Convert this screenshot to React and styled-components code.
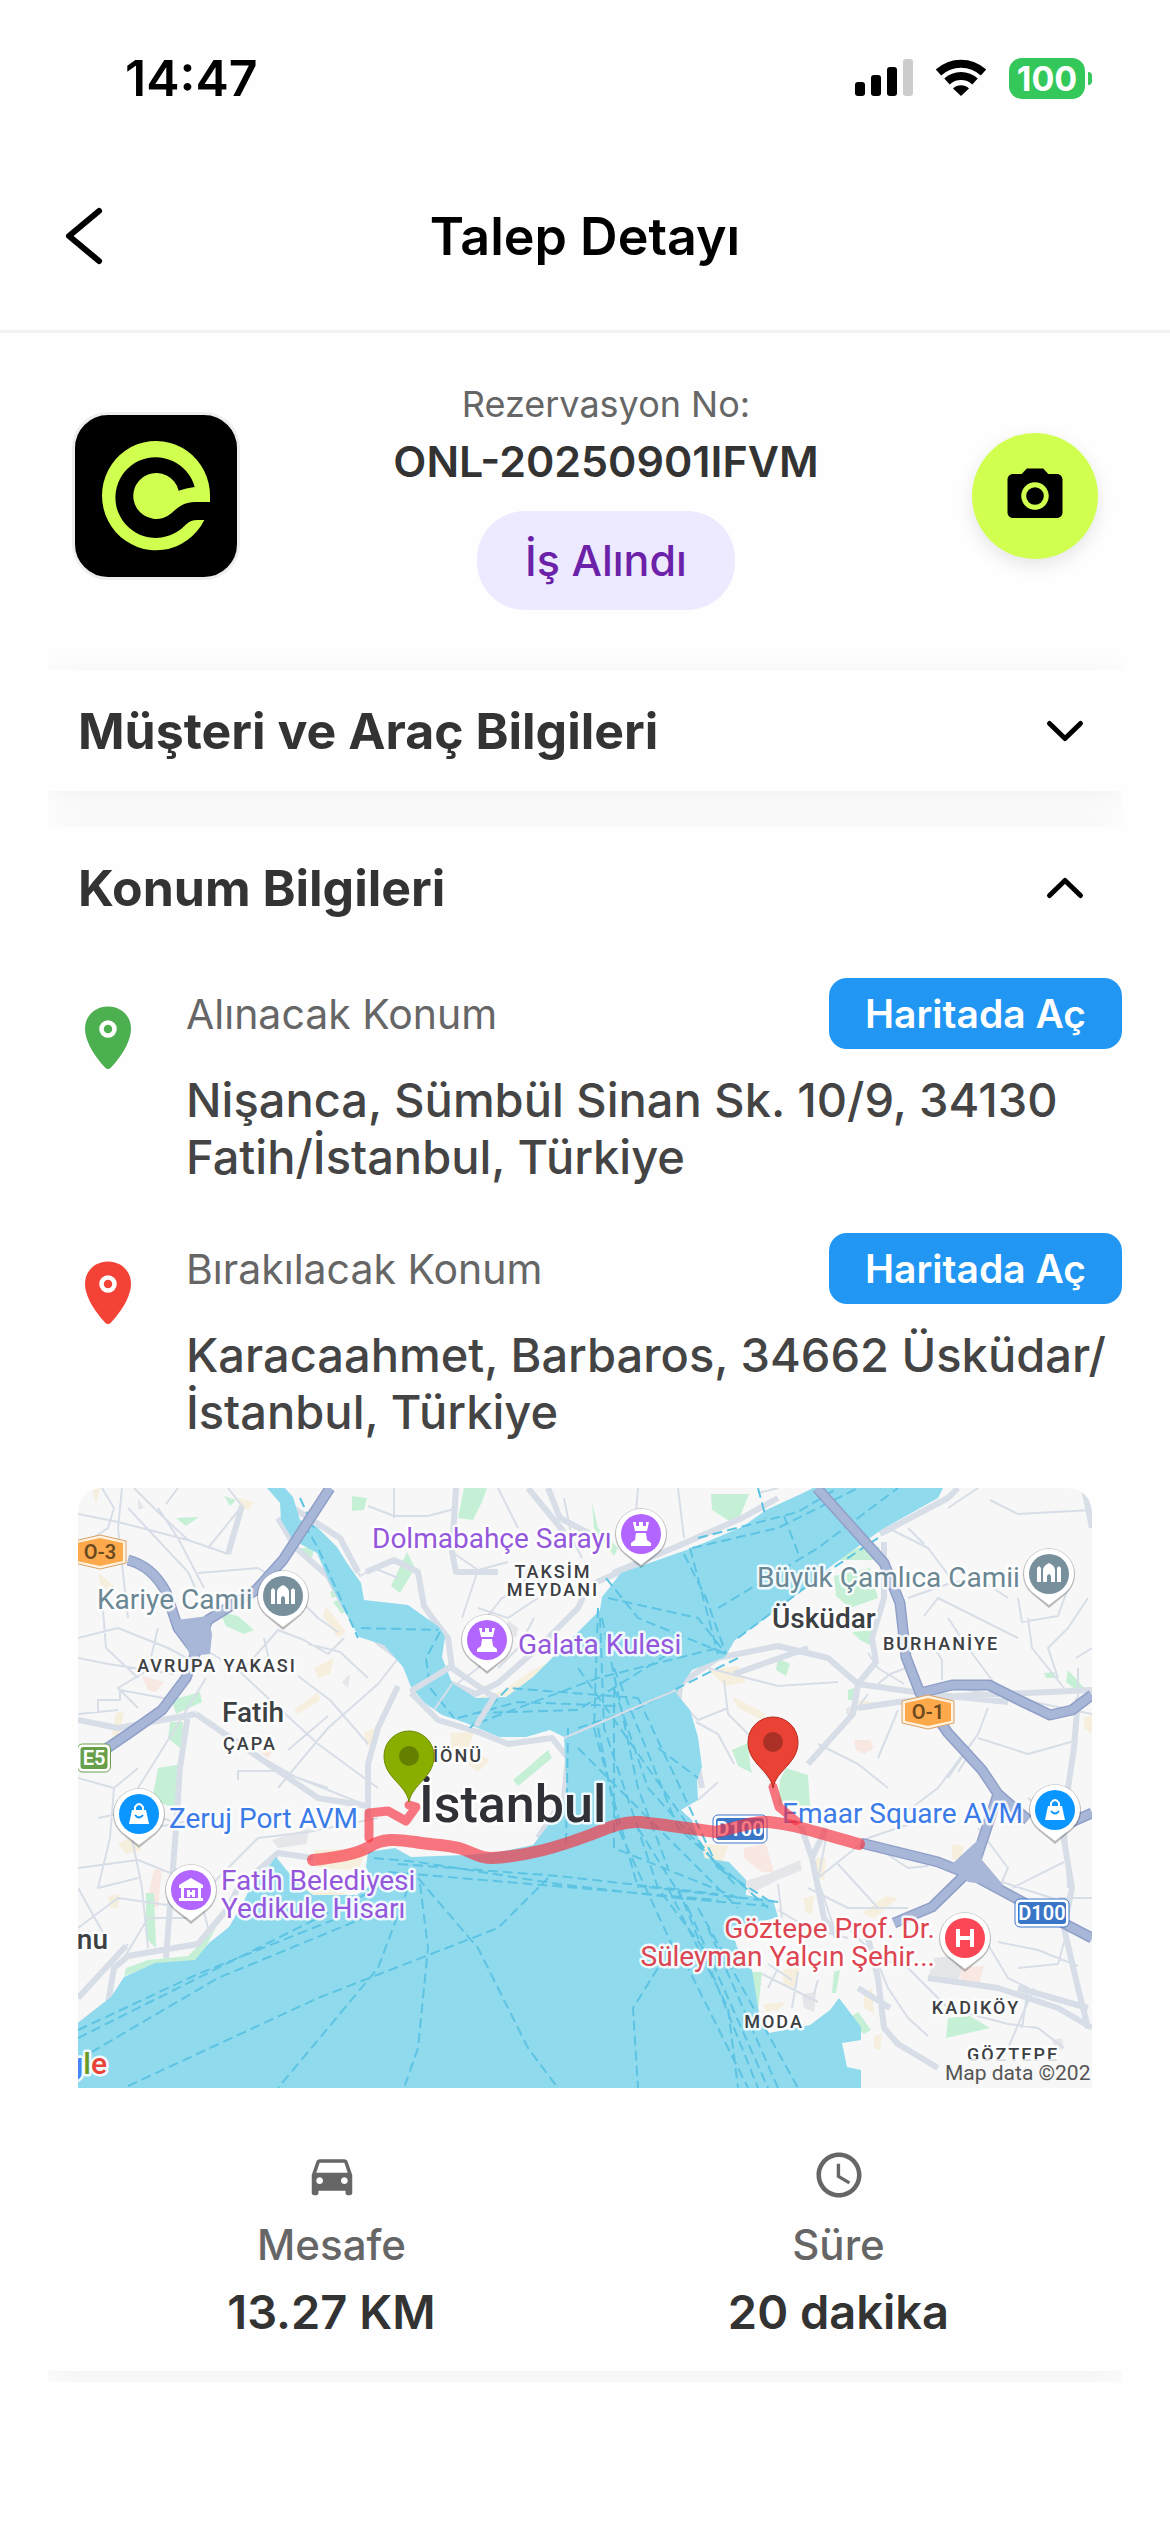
import { useState } from "react";
import styled, { createGlobalStyle } from "styled-components";
import { MdAccessTime, MdDirectionsCar, MdPhotoCamera } from "react-icons/md";

const GlobalStyle = createGlobalStyle`
  * {
    box-sizing: border-box;
  }

  body {
    margin: 0;
    background-color: #fefefe;
    font-family: "Inter", sans-serif;
  }

  h1, h2, p, dl, dt, dd {
    margin: 0;
  }

  button {
    padding: 0;
    border: none;
    background: none;
    font-family: inherit;
    cursor: pointer;
  }
`;

const Screen = styled.div`
  width: 100%;
  min-height: 100vh;
`;

const StatusBar = styled.div`
  display: flex;
  align-items: center;
  justify-content: space-between;
  height: 142px;
  padding: 14px 78px 0 125px;
`;

const Clock = styled.span`
  font-size: 50px;
  font-weight: 600;
  color: #000;
`;

const StatusIcons = styled.div`
  display: flex;
  align-items: center;
  gap: 23px;
`;

const Battery = styled.div`
  display: flex;
  align-items: center;
  gap: 3px;
`;

const BatteryBody = styled.span`
  width: 76px;
  border-radius: 13px;
  font-size: 34px;
  font-weight: 700;
  line-height: 41px;
  text-align: center;
  color: #fff;
  background-color: #34c759;
`;

const BatteryNub = styled.span`
  width: 4px;
  height: 13px;
  border-radius: 0 6px 6px 0;
  background-color: #34c759;
`;

const Header = styled.header`
  display: grid;
  grid-template-columns: 60px 1fr 60px;
  align-items: center;
  height: 191px;
  padding-inline: 54px;
  border-bottom: 3px solid #f2f2f2;
`;

const BackButton = styled.button`
  display: flex;
  align-items: center;
  justify-content: center;
  height: 60px;
`;

const Title = styled.h1`
  font-size: 52px;
  font-weight: 600;
  text-align: center;
  color: #000;
`;

const Summary = styled.section`
  display: flex;
  align-items: center;
  justify-content: space-between;
  padding: 49px 72px 15px;
`;

const Logo = styled.div`
  width: 168px;
  height: 168px;
  overflow: hidden;
  border: 3px solid #eee;
  border-radius: 36px;
  background-color: #000;

  svg {
    display: block;
  }
`;

const Reservation = styled.div`
  display: flex;
  flex-direction: column;
  align-items: center;
`;

const ReservationLabel = styled.p`
  font-size: 36px;
  line-height: 44px;
  color: #666;
`;

const ReservationNo = styled.p`
  margin-top: 10px;
  font-size: 43px;
  font-weight: 600;
  line-height: 50px;
  color: #333;
`;

const StatusPill = styled.span`
  margin-top: 25px;
  padding-inline: 48px;
  border-radius: 48px;
  font-size: 43px;
  font-weight: 500;
  line-height: 99px;
  color: #6b21a8;
  background-color: #ede9fe;
`;

const CameraButton = styled.button`
  display: flex;
  align-items: center;
  justify-content: center;
  width: 126px;
  height: 126px;
  border-radius: 50%;
  color: #000;
  background-color: #d1ff4f;
  box-shadow: 0 6px 18px rgba(0, 0, 0, 0.1);
`;

const Sections = styled.main`
  display: flex;
  flex-direction: column;
  gap: 36px;
  margin-inline: 48px;
  padding: 45px 0 11px;
  overflow: hidden;
`;

const Card = styled.section`
  background-color: #fefefe;
  box-shadow: 0 6px 36px rgba(0, 0, 0, 0.06);
`;

const CardHeader = styled.button`
  display: flex;
  align-items: center;
  justify-content: space-between;
  width: 100%;
  height: 121px;
  padding-inline: 30px;
  text-align: left;
  color: #000;
`;

const CardTitle = styled.h2`
  font-size: 50px;
  font-weight: 700;
  color: #333;
`;

const CardBody = styled.div`
  display: flex;
  flex-direction: column;
  gap: 48px;
  padding: 30px 0 31px 30px;
`;

const Location = styled.div`
  display: flex;
  gap: 48px;
`;

const PinIcon = styled.svg`
  flex-shrink: 0;
  width: 60px;
  height: 64px;
  margin-top: 28px;
  color: ${(props) => props.$color};
`;

const LocationText = styled.div`
  flex: 1;
`;

const LocationTop = styled.div`
  display: flex;
  align-items: center;
  justify-content: space-between;
  margin-bottom: 22px;
`;

const LocationLabel = styled.span`
  font-size: 41px;
  color: #666;
`;

const MapButton = styled.button`
  height: 71px;
  padding-inline: 36px;
  border-radius: 18px;
  font-size: 39px;
  font-weight: 600;
  color: #fff;
  background-color: #2196f3;
`;

const Address = styled.p`
  font-size: 47px;
  font-weight: 500;
  line-height: 57px;
  color: #444;
`;

const MapFrame = styled.div`
  margin-right: 30px;
  overflow: hidden;
  border-radius: 24px 24px 0 0;

  svg {
    display: block;
    width: 100%;
    font-family: "Roboto", sans-serif;
  }
`;

const Stats = styled.dl`
  display: grid;
  grid-template-columns: 1fr 1fr;
  padding: 12px 30px 0 0;
`;

const Stat = styled.div`
  display: flex;
  flex-direction: column;
  align-items: center;
  color: #666;
`;

const StatLabel = styled.dt`
  margin-top: 18px;
  font-size: 42px;
  font-weight: 500;
  line-height: 50px;
`;

const StatValue = styled.dd`
  margin-top: 14px;
  font-size: 47px;
  font-weight: 600;
  line-height: 56px;
  color: #333;
`;

const MapText = styled.text`
  font-size: ${(props) => props.$size || 28}px;
  font-weight: ${(props) => props.$weight || 400};
  fill: ${(props) => props.$color || "#3c4043"};
  stroke: #fff;
  stroke-width: 5px;
  stroke-opacity: 0.85;
  stroke-linejoin: round;
  paint-order: stroke;
`;

const DistrictText = styled(MapText)`
  font-size: 18px;
  font-weight: 500;
  letter-spacing: 2px;
  text-anchor: middle;
`;

const ShieldText = styled.text`
  font-size: 20px;
  font-weight: 600;
  text-anchor: middle;
  fill: ${(props) => props.$color};
`;

function SignalIcon() {
  return (
    <svg width="58" height="38" viewBox="0 0 58 38" aria-hidden="true">
      <rect x="0" y="23" width="10" height="14" rx="3" />
      <rect x="16" y="16" width="10" height="21" rx="3" />
      <rect x="32" y="8" width="10" height="29" rx="3" />
      <rect x="48" y="0" width="10" height="37" rx="3" fill="#ccc" />
    </svg>
  );
}

function WifiIcon() {
  return (
    <svg width="50" height="38" viewBox="0 0 50 38" aria-hidden="true">
      <g fill="none" stroke="#000" strokeWidth="8">
        <path d="M2.5 13.5A33 33 0 0 1 47.5 13.5" />
        <path d="M11 22.5A20.5 20.5 0 0 1 39 22.5" />
      </g>
      <path d="M25 37L17 29.5A11.5 11.5 0 0 1 33 29.5Z" />
    </svg>
  );
}

function BrandMark() {
  return (
    <svg width="162" height="162" viewBox="0 0 486 486" aria-hidden="true">
      <path
        fill="#d1ff4f"
        d="M405 261V245A162 164 0 1 0 388 315H366C347 316 340 322 329 332A121 121 0 1 1 359 216Q333 219 311 227A69 69 0 1 0 290 294C320 266 335 261 370 261Z"
      />
    </svg>
  );
}

function Chevron({ open }) {
  return (
    <svg width="54" height="54" viewBox="0 0 54 54" aria-hidden="true">
      <path
        d={open ? "M11.5 34.5L27 19.5L42.5 34.5" : "M11.5 19.5L27 34.5L42.5 19.5"}
        fill="none"
        stroke="currentColor"
        strokeWidth="5"
        strokeLinecap="round"
        strokeLinejoin="round"
      />
    </svg>
  );
}

function Pin({ color }) {
  return (
    <PinIcon $color={color} viewBox="0 0 60 64" aria-hidden="true">
      <path
        fill="currentColor"
        d="M30 0.5C17 0.5 7 10 7 22.5C7 37 19 53 27 61.5Q30 64.5 33 61.5C41 53 53 37 53 22.5C53 10 43 0.5 30 0.5Z"
      />
      <circle cx="30" cy="23" r="6.5" fill="none" stroke="#fff" strokeWidth="4.5" />
    </PinIcon>
  );
}

const land = {
  green:
    "M252 165L262 168ZM274 8L289 10L286 22L274 23ZM386 0H409L404 14L395 32L380 30ZM329 64L337 80L322 105L313 98ZM98 30L121 29L108 38ZM146 8L158 12L152 18ZM142 124L160 128L176 142L166 146L148 138ZM222 60L236 60L234 70L223 66ZM94 212L122 204L124 214L98 226ZM92 234L105 234L104 262L90 250ZM80 280L104 276L102 322L74 312ZM633 6L671 6L663 26L656 36L634 22ZM514 14L520 40L540 60L536 68L516 40ZM756 72L792 54L802 60L796 72ZM756 88L792 80L800 110L772 120L758 108ZM774 144L796 142L794 158L782 152ZM700 170L712 176L708 188L698 182ZM654 262L670 255L672 276L674 285L660 278ZM702 292L708 280L730 287L732 318L700 318ZM770 202L783 198L776 212H770ZM990 182L1008 202L998 202L988 194ZM966 185L976 184L978 190L968 190ZM435 292L470 262L474 270L440 298ZM68 405H76L78 460L68 450ZM48 480L70 472L110 468L138 440L120 474L78 476L46 488ZM674 484L684 484L680 524L676 524ZM774 528L780 524L793 542L786 546L774 536ZM870 530L892 528L912 540L868 550ZM756 484L762 482L758 505L754 505ZM265 110L268 122L264 126L255 114ZM252 104L262 100L262 108L254 110Z",
  beige:
    "M20 85L36 98L34 106L22 96ZM160 10L176 14L170 22L162 18ZM248 118L268 144L260 150L245 128ZM216 222L240 204L242 212L220 226ZM398 210L424 203L455 182L505 158L470 186L430 208ZM236 180L256 170L252 186L240 190ZM372 245L396 244L390 262L374 264ZM286 245L296 240L300 254L288 258ZM394 262L412 272L400 284L390 276ZM630 182L660 178L668 194L648 198ZM654 208L688 226L684 232L660 220ZM778 212L796 214L792 222L782 220ZM14 0L22 0L18 16ZM236 362L290 360L280 382L240 380ZM622 356L650 358L644 374L626 370ZM738 370L748 370L746 392L738 390ZM725 410L736 408L734 426L728 424ZM784 425L808 408L820 410L796 430ZM30 408L42 406L40 420L32 420ZM874 356L886 358L882 374L874 370ZM1006 230L1014 226V246L1006 240ZM40 356L50 350L64 362L48 366ZM704 482L722 478L716 500L706 496ZM786 506L794 500L796 526L786 520ZM796 548L804 546L802 562L796 560ZM686 516L708 514L700 522L688 524ZM38 225L46 224L40 252L34 246ZM200 392L250 398L272 408L240 408Z",
  pink: "M64 188L86 194L78 204L70 202ZM666 360L688 356L696 384L684 384L666 370ZM776 252L792 252L796 260L786 266L778 262ZM76 382L84 380L80 420L68 416ZM880 480L906 478L900 500L884 494ZM180 262L194 264L190 270Z",
  grey: "M856 470L888 466L880 494L850 490ZM664 394L690 386L722 372L724 382L700 392L672 406ZM194 352L232 340L228 356L200 360ZM724 506L738 504L736 524L726 520ZM430 132L440 140L438 150L428 142ZM60 10L66 20L60 22ZM974 552L984 550L986 560L978 564ZM768 220L776 218L774 228L768 226ZM264 194L272 186L270 200Z",
};

const water =
  "M189 0L202 15L203 32L215 52L239 65L252 95L266 122L281 149L306 157L325 179L333 199L347 215L364 227L388 235L421 249L448 249L472 242L486 249L489 309L469 339L455 357L421 364L388 367L333 369L317 360L290 364L288 379L296 395L279 407L235 407L219 395L198 369L171 402L165 415L151 439L131 455L117 472L77 475L46 489L33 509L0 535V600H783V582L769 579L764 555L783 552V539L761 510L752 522L732 537L691 545L681 525L674 482L659 459L654 442L700 429L695 412L668 407V392L651 374L627 370L622 355L614 332L603 322L620 312L619 292L624 279L620 249L612 222L598 205L614 182L647 169L657 152L685 132L712 112L752 79L803 42L860 10L865 0H735L725 5L688 22L664 39L614 60L543 85L524 109L522 122L502 142L455 189L428 209L398 210L374 195L364 169L367 149L361 139L347 129L330 117L286 112L283 95L269 75L259 59L239 39L222 32L215 9L207 0Z";

const minorRoads =
  "M0 26L40 34L110 52L150 66M44 0L40 40L50 130M80 20L100 50L126 100M0 60L30 40L36 20L24 0M50 20L110 84L122 110M56 0L80 24L110 52M150 0L164 18L130 60M100 0L88 16M120 85L180 80L200 92M0 150L40 140L90 160L120 176M24 110L28 160L60 190M80 140L70 182L40 200L60 220M0 170L30 176L96 186M20 225V212H42V202L96 212M128 162L160 182L190 210L240 256L300 300M220 188L252 212L290 256M128 190L100 236L60 300M118 226L170 262L220 290L290 318M200 300L250 240L300 196L322 168M230 156L262 164L290 190M164 183L200 142L226 152L250 166L266 150M186 150L192 176M212 102L240 130L260 144M210 262L250 228M160 292V283H200L250 300M290 18L316 28L350 28L380 20M316 0V30M262 50L282 88L296 80L320 90M374 64L400 82L430 74M400 82L384 130M420 0L440 40M486 10L494 50L504 70M340 100L352 128M400 120L430 130L460 110M410 170L400 140L424 110L444 100L450 80L490 90M456 130L440 160L420 180M380 195L400 180L430 150M0 226L40 222M20 330L60 322L120 342M36 300L32 350L20 400L60 390M0 380L60 372L130 400M54 350L64 400L70 460M0 440L40 410L110 420M100 340L96 380L120 400L130 440M130 400L180 350L230 344L300 330M60 280L36 300L0 290M126 330L96 336L60 342M28 450L0 400M0 510L50 456M46 470L70 430L110 430M560 0L558 24M600 0L606 50M680 5L700 0M810 40L850 60L880 100M830 40L846 56M870 20L900 0M912 12L940 26L1014 22M830 110L870 96L900 90L930 110M846 128L860 110L900 130L940 150M850 150L864 172V192M870 130L890 160L920 200L936 212M940 110L944 134L980 128L990 100M950 130L954 160L986 200M1010 110L990 140L970 160L980 190M1014 160L998 170M630 180L700 198L760 194M646 192L650 226L680 256M656 186L700 170M790 165L800 180L826 196M800 196L812 186L828 180M602 214L620 232L650 220M618 234L640 246L656 276M740 256L780 276L810 300M775 226L790 206M820 222L800 270M910 220L900 246L870 290M900 250L950 266L1000 252M880 200L946 212L1014 226M900 246L860 300L820 330M1000 180V220M894 262L880 284M740 390L790 350L850 330M730 400L770 420L830 420M760 376L800 420M700 396L704 430M800 360L830 380L850 378M900 340L930 380L924 394L980 412M950 310L976 330L988 340L990 400M934 400L986 374M1014 410L980 410M700 440L740 450M690 476L714 492M690 500L700 480M684 486L740 514M720 484L714 520M740 492L736 506M770 440L800 470L830 480L870 520L930 536L960 540L986 560M796 466L810 500L830 530L850 548M900 440L930 490L950 500L944 540M940 480L980 476L990 440M920 454L960 462L1000 478M930 560L956 500M700 422L730 440L770 450M748 350L740 392L756 440M640 294L620 312M676 250L690 290";

const mainRoads =
  "M200 30L218 60L250 88L266 118L300 154L330 176M212 18L262 50L280 84M150 66L164 18M378 0L374 64L378 84L420 84M470 0L482 30L520 50M450 0L486 44M288 84L316 72L340 84L346 118L356 132L370 150L374 180L420 212L410 236M333 205L374 178M320 198L300 240L290 276L290 330M118 226L40 240L0 232M110 226L102 280L98 340L88 470M118 226L170 262L240 310L290 318M333 205L360 232L400 244L430 256L474 250L490 270L486 310L460 350M372 195L398 206L420 195L460 160L500 120L510 98L560 76M535 85L600 58L664 30L700 10M0 538L30 515L36 480L50 468L96 460L120 456L150 420L160 400L200 365L235 370M0 510L48 458M640 170L602 196L600 220L616 260L624 300M640 170L700 158L750 170L780 196L775 226L730 276M656 186L730 160M802 46L870 10L880 0M806 54L806 110L794 150L798 174L780 196M780 220L820 214L880 208L1014 202M780 196L850 206L930 214M1000 210L996 260L990 300L984 340L994 400L986 440L1000 500L1010 540M850 490L920 500L980 520L1014 540M790 450L800 490L806 540L820 556L860 580M748 340L734 370L746 430L760 450M720 330L734 370M1006 0L1014 40M780 500L812 520M940 500L1010 520";

const ferryLines =
  "M222 10L236 40M226 36L240 60L280 150M283 140L360 142M362 144L348 170L352 200L376 230M400 225L500 222L600 160M400 235L520 190L640 160M392 240L430 200L560 210M380 230L440 214L540 218M528 90L560 130L648 166M606 66L628 110L648 166M612 60L640 166M530 110L620 130L648 166M614 60L700 40L780 0M620 50L720 24L760 0M640 120L740 60L820 0M660 150L740 90L800 50M520 120L516 240L560 400M522 130L526 240L580 400L640 480M524 130L560 300L590 380M536 200L570 300L660 400M536 180L600 340L690 420M560 210L640 380L690 412M536 200V360L660 410M500 180L640 380M520 240L540 340L600 470M580 260L620 290M500 240L560 220L660 170M500 260L580 340L660 420M296 370L340 374L480 396L600 410L690 418M310 384L500 400L640 412M320 376L480 388L640 406M490 240L488 360M600 400L680 600M590 400L650 520L660 600M620 420L720 600M630 440L700 600M610 420L690 600M600 460L650 560L670 600M580 480L555 520L560 600M340 390L400 460L450 560L480 600M342 396L350 460L340 560L326 600M330 400L300 480L200 600M0 550L180 460L300 400M0 542L120 486L260 430M0 572L140 490L300 424M50 598L240 510L420 440L470 390M700 414L560 398M680 0L688 30M706 28L722 70M560 340L610 420";

const motorways =
  "M50 72Q74 78 88 104L100 140L118 164L108 190L84 222L50 246L0 280M252 0L205 72L178 102L130 132L118 160M739 0L806 75L822 115L828 169L842 205L870 245L904 282L920 306L908 342L896 378L854 419L816 435M783 355L860 374L900 390L941 412L1014 450M842 205L874 197L911 197L941 212L972 227L994 222L1014 207M920 306L950 332M980 340L1014 325";

const route =
  "M235 372C262 369 278 366 291 359C304 350 318 351 337 354C352 357 366 356 381 360C395 364 400 370 414 370C450 368 480 359 512 347C534 338 546 333 562 334C590 337 614 341 637 344C660 340 672 333 691 334C712 336 724 340 781 356";

function PoiPin({ x, y, color, children }) {
  return (
    <g transform={`translate(${x} ${y})`}>
      <path d="M0 34L-17 20A26 26 0 1 1 17 20Z" fill="#000" opacity="0.25" />
      <path d="M0 31L-17 18A25 25 0 1 1 17 18Z" fill="#fff" />
      <circle r="20" fill={color} />
      {children}
    </g>
  );
}

function TowerGlyph() {
  return (
    <path
      fill="#fff"
      d="M-8 -12H-5V-8H-2V-12H2V-8H5V-12H8L6 -3H-6ZM-5 -1H5L6 6L10 9V12H-10V9L-6 6Z"
    />
  );
}

function MosqueGlyph() {
  return (
    <path
      fill="#fff"
      d="M-12 -6L-10 -8L-8 -6V8H-12ZM12 -6L10 -8L8 -6V8H12ZM-6 8V-4Q-6 -8 0 -11Q6 -8 6 -4V8H2V2Q0 -2 -2 2V8Z"
    />
  );
}

function BagGlyph() {
  return (
    <g fill="none" stroke="#fff">
      <path d="M-4 -4V-7Q0 -13 4 -7V-4" strokeWidth="2" />
      <path d="M-7 -4H7L10 10H-10Z" fill="#fff" stroke="none" />
      <path d="M-4 1Q0 6 4 1" stroke="#0a95ff" strokeWidth="2" />
    </g>
  );
}

function MuseumGlyph() {
  return (
    <path
      fill="#fff"
      fillRule="evenodd"
      d="M0 -12L12 -5V-2H10V8H12V11H-12V8H-10V-2H-12V-5ZM-7 -2V8H7V-2ZM-4 0H-1V2H1V0H4V7H1V5H-1V7H-4Z"
    />
  );
}

function Marker({ x, y, color, edge, dot }) {
  return (
    <g transform={`translate(${x} ${y})`}>
      <path
        d="M0 46C-3 28 -25 22 -25 0A25 25 0 1 1 25 0C25 22 3 28 0 46Z"
        fill={color}
        stroke={edge}
      />
      <circle r="10" fill={dot} />
    </g>
  );
}

function HexShield({ x, y, children }) {
  return (
    <g transform={`translate(${x} ${y})`}>
      <path
        d="M-26 -11L0 -17L26 -11V11L0 17L-26 11Z"
        fill="#fff3e0"
        stroke="#d9a066"
        strokeLinejoin="round"
      />
      <path d="M-23 -9L0 -14L23 -9V9L0 14L-23 9Z" fill="#ffa94d" />
      <ShieldText y="7" $color="#6b4a1f">
        {children}
      </ShieldText>
    </g>
  );
}

function RoadShield({ x, y, width, color, children }) {
  return (
    <g transform={`translate(${x} ${y})`}>
      <rect x={-width / 2} y="-14" width={width} height="28" rx="5" fill="#fff" stroke={color} />
      <rect x={3 - width / 2} y="-11" width={width - 6} height="22" rx="3" fill={color} />
      <ShieldText y="7" $color="#fff">
        {children}
      </ShieldText>
    </g>
  );
}

function RouteMap() {
  const purple = "#9457dc";
  const slate = "#6a8794";
  const blue = "#3b7be8";
  const red = "#dc4551";

  return (
    <svg viewBox="0 0 1014 600" role="img" aria-label="Rota haritası">
      <rect width="1014" height="600" fill="#f7f7f7" />
      <path d={land.beige} fill="#f7efdd" />
      <path d={land.pink} fill="#f9e8e2" />
      <path d={land.grey} fill="#e4e6e9" />
      <path d={land.green} fill="#c5f0d6" />
      <g fill="none" stroke="#d7dee7" strokeLinejoin="round">
        <path d={minorRoads} strokeWidth="2" />
        <path d={mainRoads} strokeWidth="6" />
      </g>
      <path d={water} fill="#90daee" />
      <path d={ferryLines} fill="none" stroke="#5cc4e2" strokeWidth="2" strokeDasharray="10 5" />
      <g fill="none" stroke="#d7dee7">
        <path d="M333 203L374 178M398 238L418 206" strokeWidth="6" />
        <path d="M486 250L598 202M356 222L374 196" strokeWidth="2" />
      </g>
      <g fill="none" strokeLinejoin="round">
        <path d={motorways} stroke="#8f9fc8" strokeWidth="11" />
        <path d={motorways} stroke="#a8b7d7" strokeWidth="8" />
      </g>
      <path d="M99 132L130 128L134 146L132 166L112 168ZM874 376L900 352L904 372L926 398L890 394Z" fill="#a8b7d7" />

      <HexShield x={22} y={64}>O-3</HexShield>
      <HexShield x={850} y={224}>O-1</HexShield>
      <RoadShield x={16} y={270} width={33} color="#689f4b">E5</RoadShield>
      <RoadShield x={662} y={341} width={54} color="#3a76c8">D100</RoadShield>
      <RoadShield x={964} y={425} width={54} color="#3a76c8">D100</RoadShield>

      <MapText x="294" y="60" $color={purple}>Dolmabahçe Sarayı</MapText>
      <MapText x="440" y="166" $color={purple}>Galata Kulesi</MapText>
      <MapText x="143" y="402" $color={purple}>Fatih Belediyesi</MapText>
      <MapText x="143" y="430" $color={purple}>Yedikule Hisarı</MapText>
      <MapText x="19" y="121" $color={slate}>Kariye Camii</MapText>
      <MapText x="679" y="99" $color={slate}>Büyük Çamlıca Camii</MapText>
      <MapText x="91" y="340" $color={blue}>Zeruj Port AVM</MapText>
      <MapText x="704" y="335" $color={blue}>Emaar Square AVM</MapText>
      <MapText x="857" y="450" textAnchor="end" $color={red}>Göztepe Prof. Dr.</MapText>
      <MapText x="857" y="478" textAnchor="end" $color={red}>Süleyman Yalçın Şehir...</MapText>
      <MapText x="144" y="234" $weight={500}>Fatih</MapText>
      <MapText x="694" y="140" $weight={500}>Üsküdar</MapText>
      <MapText x="30" y="461" textAnchor="end" $weight={500}>nu</MapText>

      <DistrictText x="475" y="90">TAKSİM</DistrictText>
      <DistrictText x="475" y="108">MEYDANI</DistrictText>
      <DistrictText x="139" y="184">AVRUPA YAKASI</DistrictText>
      <DistrictText x="172" y="262">ÇAPA</DistrictText>
      <DistrictText x="380" y="274">İÖNÜ</DistrictText>
      <DistrictText x="863" y="162">BURHANİYE</DistrictText>
      <DistrictText x="696" y="540">MODA</DistrictText>
      <DistrictText x="898" y="526">KADIKÖY</DistrictText>
      <DistrictText x="935" y="573">GÖZTEPE</DistrictText>

      <g fill="none" stroke="#f8303e" strokeOpacity="0.65" strokeLinecap="round" strokeLinejoin="round">
        <path d={route} strokeWidth="12" />
        <path d="M291 350V325L310 323L328 333L338 319L331 317M695 299L701 319L718 333" strokeWidth="9" />
      </g>
      <MapText x="341" y="334" $size={52} $weight={500} $color="#2f3136">İstanbul</MapText>

      <PoiPin x={205} y={108} color="#78909c"><MosqueGlyph /></PoiPin>
      <PoiPin x={971} y={86} color="#78909c"><MosqueGlyph /></PoiPin>
      <PoiPin x={563} y={46} color="#b266ff"><TowerGlyph /></PoiPin>
      <PoiPin x={409} y={152} color="#b266ff"><TowerGlyph /></PoiPin>
      <PoiPin x={113} y={402} color="#b266ff"><MuseumGlyph /></PoiPin>
      <PoiPin x={61} y={326} color="#0a95ff"><BagGlyph /></PoiPin>
      <PoiPin x={977} y={322} color="#0a95ff"><BagGlyph /></PoiPin>
      <PoiPin x={887} y={450} color="#fa4655">
        <path d="M-7 -9V9M7 -9V9M-7 0H7" stroke="#fff" strokeWidth="4" />
      </PoiPin>

      <Marker x={331} y={268} color="#8aae00" edge="#6d8a00" dot="#658000" />
      <Marker x={695} y={254} color="#ea4335" edge="#b8271b" dot="#ab3026" />

      <rect x="864" y="571" width="150" height="29" fill="#f7f7f7" opacity="0.85" />
      <text x="867" y="592" fontSize="21" fill="#555">Map data ©202</text>
      <MapText x="29" y="586" textAnchor="end" $size={30} $weight={500} $color="#4285f4">
        g<tspan fill="#6a9a23">l</tspan><tspan fill="#ea4335">e</tspan>
      </MapText>
    </svg>
  );
}

function LocationRow({ color, label, address }) {
  return (
    <Location>
      <Pin color={color} />
      <LocationText>
        <LocationTop>
          <LocationLabel>{label}</LocationLabel>
          <MapButton>Haritada Aç</MapButton>
        </LocationTop>
        <Address>{address}</Address>
      </LocationText>
    </Location>
  );
}

export default function App() {
  const [customerOpen, setCustomerOpen] = useState(false);
  const [locationOpen, setLocationOpen] = useState(true);

  return (
    <Screen>
      <GlobalStyle />
      <StatusBar>
        <Clock>14:47</Clock>
        <StatusIcons>
          <SignalIcon />
          <WifiIcon />
          <Battery>
            <BatteryBody>100</BatteryBody>
            <BatteryNub />
          </Battery>
        </StatusIcons>
      </StatusBar>

      <Header>
        <BackButton aria-label="Geri">
          <svg width="42" height="60" viewBox="0 0 42 60" aria-hidden="true">
            <path
              d="M36 5L6 30L36 55"
              fill="none"
              stroke="#000"
              strokeWidth="6"
              strokeLinecap="round"
              strokeLinejoin="round"
            />
          </svg>
        </BackButton>
        <Title>Talep Detayı</Title>
      </Header>

      <Summary>
        <Logo>
          <BrandMark />
        </Logo>
        <Reservation>
          <ReservationLabel>Rezervasyon No:</ReservationLabel>
          <ReservationNo>ONL-20250901IFVM</ReservationNo>
          <StatusPill>İş Alındı</StatusPill>
        </Reservation>
        <CameraButton aria-label="Fotoğraf çek">
          <MdPhotoCamera size={66} />
        </CameraButton>
      </Summary>

      <Sections>
        <Card>
          <CardHeader aria-expanded={customerOpen} onClick={() => setCustomerOpen(!customerOpen)}>
            <CardTitle>Müşteri ve Araç Bilgileri</CardTitle>
            <Chevron open={customerOpen} />
          </CardHeader>
        </Card>

        <Card>
          <CardHeader aria-expanded={locationOpen} onClick={() => setLocationOpen(!locationOpen)}>
            <CardTitle>Konum Bilgileri</CardTitle>
            <Chevron open={locationOpen} />
          </CardHeader>
          {locationOpen && (
            <CardBody>
              <LocationRow
                color="#4caf50"
                label="Alınacak Konum"
                address="Nişanca, Sümbül Sinan Sk. 10/9, 34130 Fatih/İstanbul, Türkiye"
              />
              <LocationRow
                color="#f44336"
                label="Bırakılacak Konum"
                address="Karacaahmet, Barbaros, 34662 Üsküdar/İstanbul, Türkiye"
              />
              <MapFrame>
                <RouteMap />
              </MapFrame>
              <Stats>
                <Stat>
                  <MdDirectionsCar size={54} />
                  <StatLabel>Mesafe</StatLabel>
                  <StatValue>13.27 KM</StatValue>
                </Stat>
                <Stat>
                  <MdAccessTime size={54} />
                  <StatLabel>Süre</StatLabel>
                  <StatValue>20 dakika</StatValue>
                </Stat>
              </Stats>
            </CardBody>
          )}
        </Card>
      </Sections>
    </Screen>
  );
}
